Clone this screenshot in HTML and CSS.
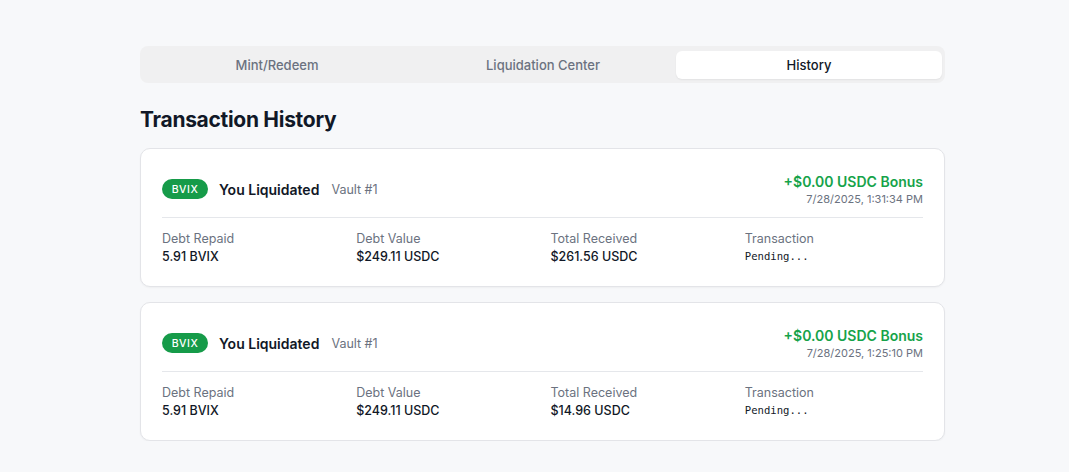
FILE: index.html
```html
<!DOCTYPE html>
<html>
<head>
<meta charset="utf-8">
<link rel="stylesheet" href="styles.css">
</head>
<body>
<main class="page">
  <nav class="tabs">
    <div class="tab">Mint/Redeem</div>
    <div class="tab">Liquidation Center</div>
    <div class="tab active">History</div>
  </nav>
  <h1 class="title">Transaction History</h1>
  <section class="list">
    <article class="card">
      <div class="card-head">
        <div class="head-left">
          <span class="badge">BVIX</span>
          <span class="action">You Liquidated</span>
          <span class="vault">Vault #1</span>
        </div>
        <div class="head-right">
          <div class="bonus">+$0.00 USDC Bonus</div>
          <div class="date">7/28/2025, 1:31:34 PM</div>
        </div>
      </div>
      <div class="stats">
        <div class="stat"><div class="label">Debt Repaid</div><div class="value">5.91 BVIX</div></div>
        <div class="stat"><div class="label">Debt Value</div><div class="value">$249.11 USDC</div></div>
        <div class="stat"><div class="label">Total Received</div><div class="value">$261.56 USDC</div></div>
        <div class="stat"><div class="label">Transaction</div><div class="value mono">Pending...</div></div>
      </div>
    </article>
    <article class="card">
      <div class="card-head">
        <div class="head-left">
          <span class="badge">BVIX</span>
          <span class="action">You Liquidated</span>
          <span class="vault">Vault #1</span>
        </div>
        <div class="head-right">
          <div class="bonus">+$0.00 USDC Bonus</div>
          <div class="date">7/28/2025, 1:25:10 PM</div>
        </div>
      </div>
      <div class="stats">
        <div class="stat"><div class="label">Debt Repaid</div><div class="value">5.91 BVIX</div></div>
        <div class="stat"><div class="label">Debt Value</div><div class="value">$249.11 USDC</div></div>
        <div class="stat"><div class="label">Total Received</div><div class="value">$14.96 USDC</div></div>
        <div class="stat"><div class="label">Transaction</div><div class="value mono">Pending...</div></div>
      </div>
    </article>
  </section>
</main>
</body>
</html>
```
FILE: styles.css
```css
* { box-sizing: border-box; }
html, body { margin: 0; padding: 0; }
body {
  background: #f7f8fa;
  font-family: Inter, "Noto Sans", sans-serif;
  color: #111827;
}
.page {
  width: 805px;
  margin-left: 140px;
  padding-top: 46px;
}
.tabs {
  display: grid;
  grid-template-columns: 1fr 1fr 1fr;
  background: #f0f0f1;
  border-radius: 8px;
  padding: 5px 3px 4px 4px;
}
.tab {
  height: 28px;
  display: flex;
  align-items: center;
  justify-content: center;
  font-size: 13px;
  font-weight: 500;
  color: #6b7280;
  border-radius: 6px;
}
.tab.active {
  background: #fff;
  color: #111827;
  box-shadow: 0 1px 2px rgba(0,0,0,0.06);
}
.title {
  margin: 23px 0 14px;
  font-size: 21px;
  line-height: 28px;
  font-weight: 700;
  letter-spacing: -0.3px;
}
.list {
  display: flex;
  flex-direction: column;
  gap: 15px;
}
.card {
  background: #fff;
  border: 1px solid #e3e4e8;
  border-radius: 10px;
  box-shadow: 0 1px 2px rgba(0,0,0,0.04);
  padding: 20px 21px 20px 21px;
}
.card-head {
  display: flex;
  justify-content: space-between;
  align-items: center;
  height: 40px;
  margin-bottom: 8px;
}
.head-left {
  display: flex;
  align-items: center;
}
.badge {
  background: #169b49;
  color: #fff;
  font-size: 10.5px;
  font-weight: 500;
  letter-spacing: 0.5px;
  height: 20px;
  width: 46px;
  border-radius: 10px;
  display: inline-flex;
  align-items: center;
  justify-content: center;
  margin-right: 11px;
}
.action {
  font-size: 14px;
  font-weight: 600;
  margin-right: 12px;
}
.vault {
  font-size: 12.5px;
  color: #6b7280;
}
.head-right {
  text-align: right;
}
.bonus {
  color: #16a34a;
  font-size: 14px;
  font-weight: 600;
  line-height: 20px;
}
.date {
  font-size: 11px;
  color: #6b7280;
  line-height: 15px;
}
.stats {
  border-top: 1px solid #e5e7eb;
  padding-top: 11px;
  display: grid;
  grid-template-columns: repeat(4, 1fr);
  gap: 16px;
}
.label {
  font-size: 12.5px;
  line-height: 19px;
  color: #6b7280;
}
.value {
  font-size: 12.5px;
  line-height: 18px;
  font-weight: 500;
  color: #111827;
}
.value.mono {
  font-family: "DejaVu Sans Mono", monospace;
  font-size: 10.6px;
  font-weight: 400;
  line-height: 16px;
}
```
